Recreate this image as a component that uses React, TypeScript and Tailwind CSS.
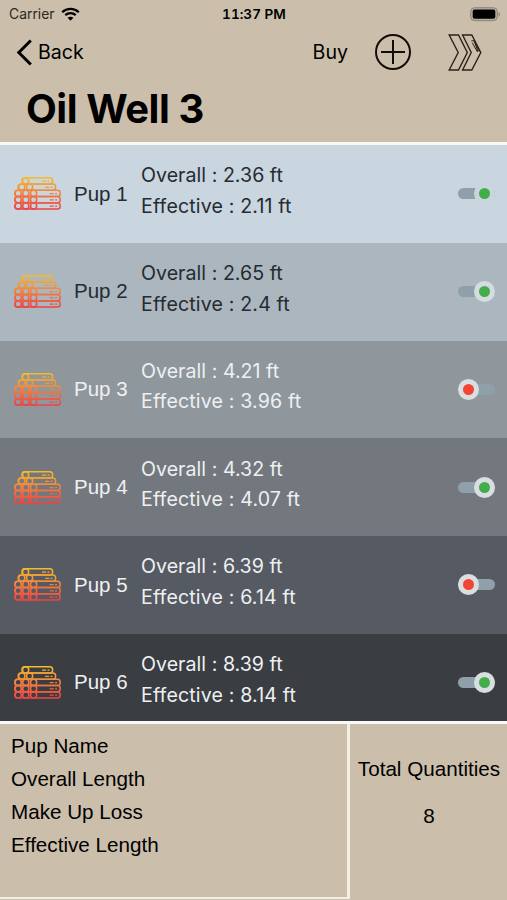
const pups = [
  { name: 'Pup 1', overall: '2.36', effective: '2.11', on: true, row: 'bg-[#c9d5df] text-[#252b31]', ring: 'bg-[#c9d5df]' },
  { name: 'Pup 2', overall: '2.65', effective: '2.4', on: true, row: 'bg-[#abb6be] text-[#252b31]', ring: 'bg-[#d5dbdf]' },
  { name: 'Pup 3', overall: '4.21', effective: '3.96', on: false, row: 'bg-[#8f979d] text-[#eef0f2]', ring: 'bg-[#d9dee1]' },
  { name: 'Pup 4', overall: '4.32', effective: '4.07', on: true, row: 'bg-[#73787e] text-[#eef0f2]', ring: 'bg-[#d9dee1]' },
  { name: 'Pup 5', overall: '6.39', effective: '6.14', on: false, row: 'bg-[#565a62] text-[#eef0f2]', ring: 'bg-[#d9dee1]' },
  { name: 'Pup 6', overall: '8.39', effective: '8.14', on: true, row: 'bg-[#3a3d42] text-[#eef0f2]', ring: 'bg-[#d9dee1]' },
];

const details = ['Pup Name', 'Overall Length', 'Make Up Loss', 'Effective Length'];

// Each layer of the pipe stack: outline and the centres of the pipe ends
const layers = [
  { x: 8, y: 0.8, w: 30.6, ends: [11.6] },
  { x: 4.2, y: 7, w: 37.4, ends: [7.8, 15.6] },
  { x: 0.8, y: 13.3, w: 45.4, ends: [4.2, 11.8, 19.6] },
  { x: 0.8, y: 19.6, w: 45.4, ends: [4.2, 11.8, 19.6] },
  { x: 0.8, y: 25.9, w: 45.4, ends: [4.2, 11.8, 19.6] },
];

function PipeStack({ id }: { id: string }) {
  return (
    <svg width="47" height="33" viewBox="0 0 47 33" fill="none" stroke={`url(#${id})`} strokeWidth="1.5">
      <defs>
        <linearGradient id={id} gradientUnits="userSpaceOnUse" x1="0" y1="0" x2="0" y2="33">
          <stop offset="0" stopColor="#f5bd2a" />
          <stop offset="0.5" stopColor="#f1803f" />
          <stop offset="1" stopColor="#ec4045" />
        </linearGradient>
      </defs>
      {layers.map((l) => (
        <g key={l.y}>
          <rect x={l.x} y={l.y} width={l.w} height="6.2" rx="2.8" />
          {l.ends.map((cx) => (
            <circle key={cx} cx={cx} cy={l.y + 3.1} r="3.1" />
          ))}
          <path
            d={`M${l.x + l.w - 10.5} ${l.y + 3.3}h4m1.4 0h2`}
            strokeWidth="1.3"
          />
        </g>
      ))}
    </svg>
  );
}

function Toggle({ on, ring }: { on: boolean; ring: string }) {
  return (
    <div
      className={`relative flex h-[21px] w-[37px] items-center ${on ? 'justify-end' : 'justify-start'}`}
    >
      <div className="absolute inset-x-0 top-[5px] h-[11px] rounded-full bg-[#8fa0ab]" />
      <div className={`relative flex size-[21px] items-center justify-center rounded-full ${ring}`}>
        <div className={`size-[11px] rounded-full ${on ? 'bg-[#43ad4b]' : 'bg-[#f24536]'}`} />
      </div>
    </div>
  );
}

function StatusBar() {
  return (
    <div className="flex h-7 items-center justify-between pr-[6px] pl-[9px]">
      <div className="flex w-[120px] items-center gap-[6px]">
        <span className="text-[13.9px] text-[#2b2722]">Carrier</span>
        <svg width="19" height="14" viewBox="0 0 19 14" fill="none" stroke="#000" strokeWidth="2.3">
          <path d="M1.2 5.2C5.8.7 13.2.7 17.8 5.2" />
          <path d="M4.3 8.2c2.9-2.8 7.5-2.8 10.4 0" />
          <path d="M9.5 13.7 6.6 10.8c1.6-1.5 4.2-1.5 5.8 0z" fill="#000" stroke="none" />
        </svg>
      </div>
      <span className="pr-[2px] text-[13.6px] font-semibold tabular-nums">11:37 PM</span>
      <div className="flex w-[120px] justify-end">
        <svg width="31" height="15" viewBox="0 0 31 15">
          <rect x="0.7" y="0.7" width="26.6" height="13" rx="4" fill="#b5ad9d" stroke="#8b8579" />
          <rect x="2.7" y="2.6" width="22.6" height="9.2" rx="2" fill="#000" />
          <path d="M28.5 5.2c2 .6 2 3.6 0 4.2z" fill="#8b8579" />
        </svg>
      </div>
    </div>
  );
}

function NavBar() {
  return (
    <div className="flex h-12 items-center pr-[25px] pl-4">
      <svg width="17" height="27" viewBox="0 0 17 27" fill="none" stroke="#000" strokeWidth="3">
        <path d="M14.8 1.5 2.8 13.5l12 12" />
      </svg>
      <span className="ml-[5px] pt-[2px] text-[19.6px]">Back</span>
      <span className="ml-auto pt-[2px] text-[19.6px]">Buy</span>
      <svg className="ml-[27px]" width="36" height="36" viewBox="0 0 36 36" fill="none" stroke="#120d08" strokeWidth="2">
        <circle cx="18" cy="18" r="17" />
        <path d="M18 6v24M6 18h24" />
      </svg>
      <svg className="ml-[37px]" width="34" height="37" viewBox="0 0 34 37" fill="none" stroke="#2b231b" strokeWidth="1.4">
        <path d="M1.2 1h9.3l8.8 17.5L10.5 36H1.2l9-17.5z" />
        <path d="M14.6 1h9.2l9 17.5-9 17.5h-9.2l8.6-17.5z" />
        <path d="M23.4 6.8h2.6l5.3 10.8M24.3 8.8l5.2 9.2M26.3 7.4l3.6 10" strokeWidth="1" />
      </svg>
    </div>
  );
}

export default function App() {
  return (
    <div className="flex h-[900px] w-[507px] flex-col overflow-hidden bg-[#cbbfab] font-['Inter',sans-serif] text-black [font-feature-settings:'calt'_0]">
      <header className="h-[142px] shrink-0">
        <StatusBar />
        <NavBar />
        <h1 className="pl-[26px] text-[40px] leading-[66px] font-bold tracking-[-0.45px]">Oil Well 3</h1>
      </header>

      <main className="h-[582px] shrink-0 overflow-hidden border-y-3 border-[#f8f8f5]">
        {pups.map((pup, i) => (
          <div key={pup.name} className={`flex h-[97.75px] items-center pr-3 pl-[14px] ${pup.row}`}>
            <PipeStack id={`pipes-${i}`} />
            <span className="ml-[13px] w-[67px] font-['Liberation_Sans',sans-serif] text-[20.5px]">{pup.name}</span>
            <div className="pb-[6px] text-[19.6px] leading-[30.5px]">
              <p className="tracking-[0.03px]">Overall : {pup.overall} ft</p>
              <p className="tracking-[0.15px]">Effective : {pup.effective} ft</p>
            </div>
            <div className="ml-auto">
              <Toggle on={pup.on} ring={pup.ring} />
            </div>
          </div>
        ))}
      </main>

      <footer className="flex flex-1 font-['Liberation_Sans',sans-serif] text-[20.65px]">
        <div className="mb-[1px] w-[350px] border-r-3 border-b-2 border-[#f3efe7] pt-[5px] pl-[11px] leading-[33px]">
          {details.map((label) => (
            <p key={label}>{label}</p>
          ))}
        </div>
        <div className="flex-1 pt-[28px] pl-[1px] text-center leading-[33px]">
          <p>Total Quantities</p>
          <p className="mt-[14px]">8</p>
        </div>
      </footer>
    </div>
  );
}
